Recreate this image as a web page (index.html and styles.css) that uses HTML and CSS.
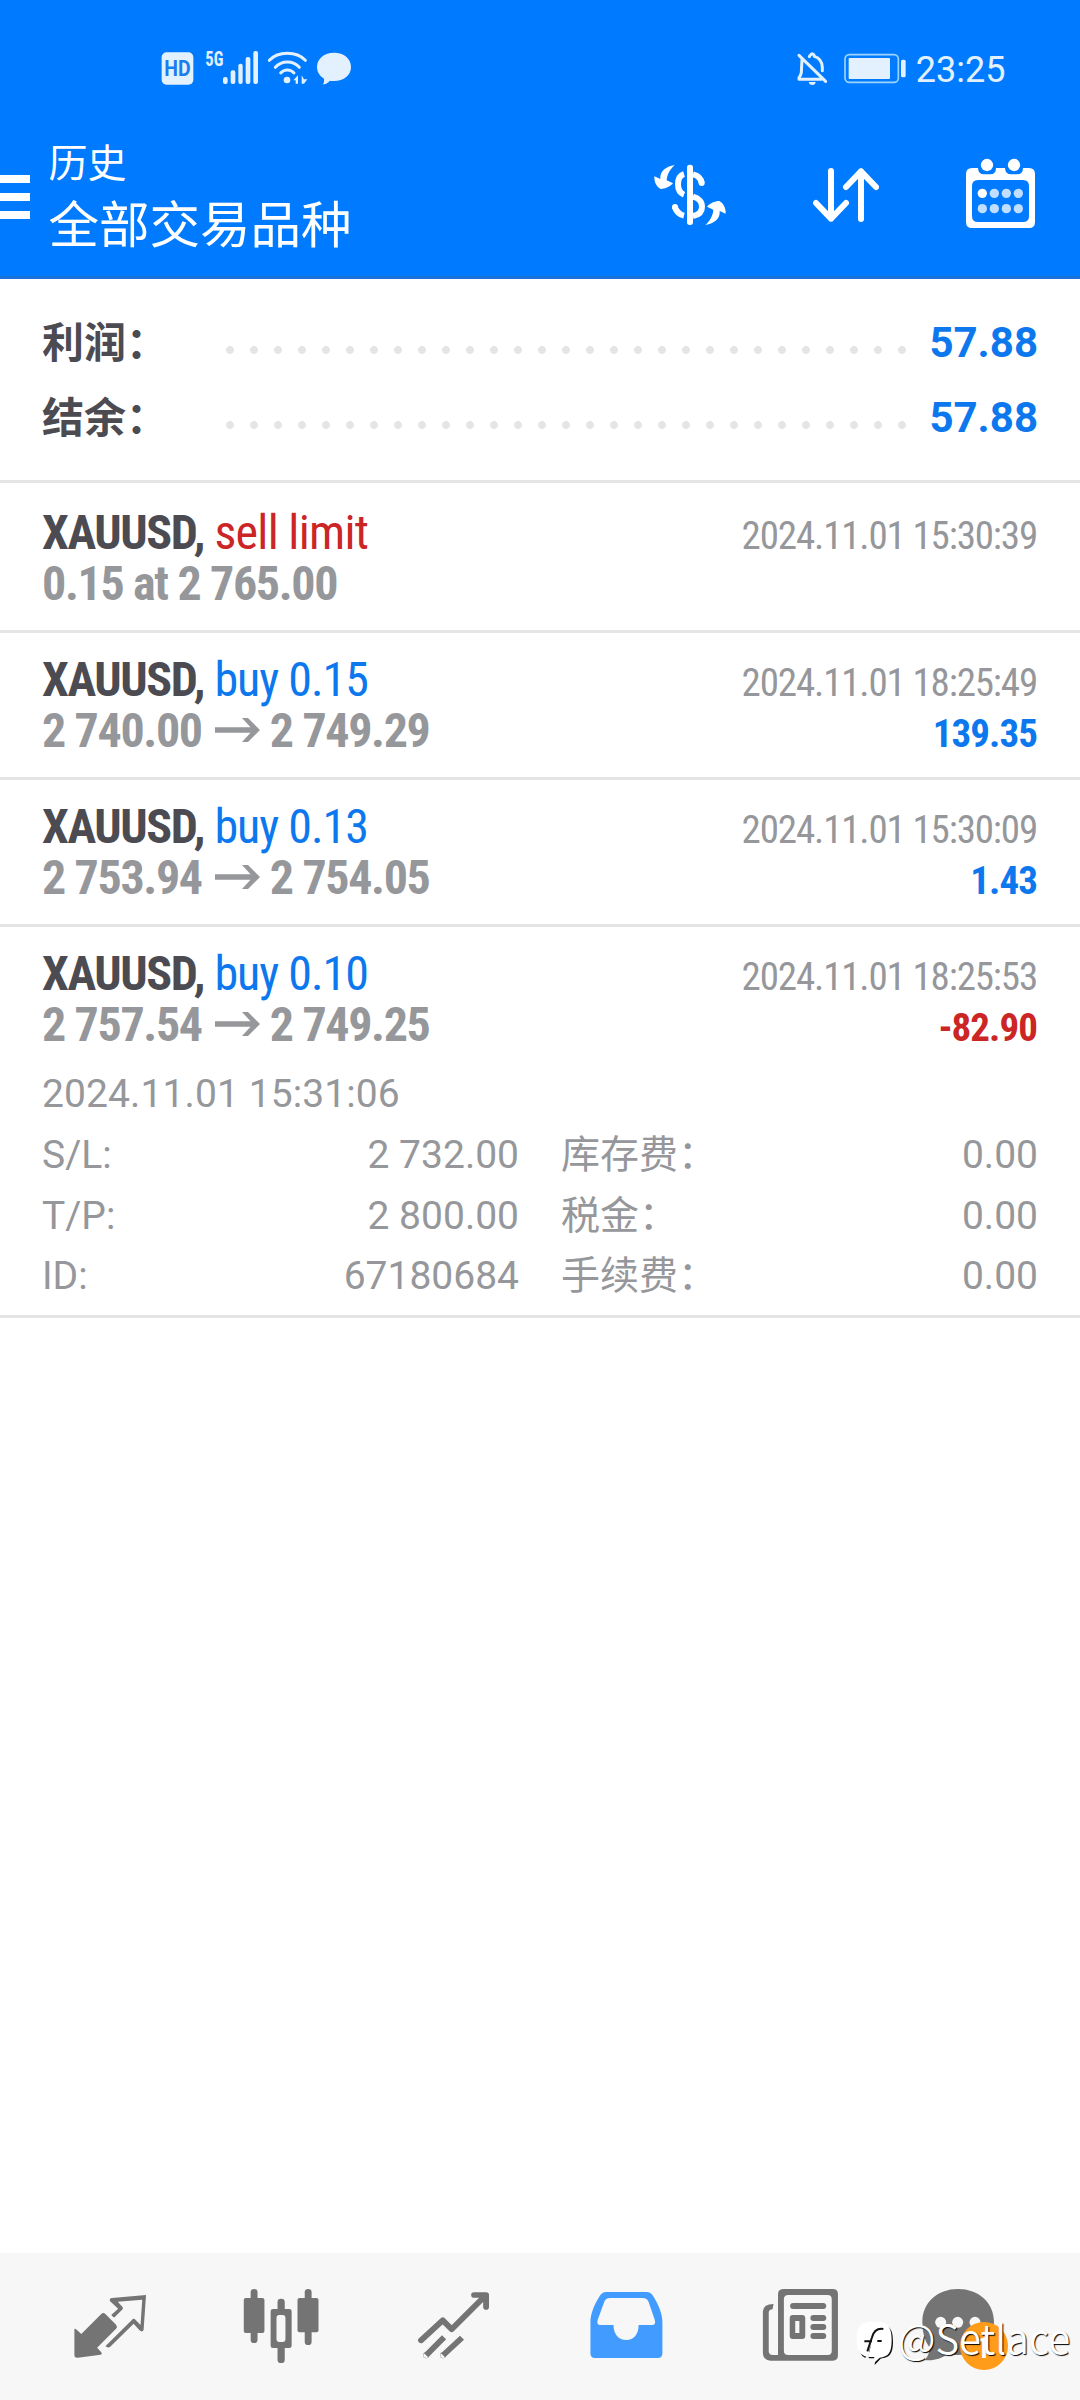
FILE: index.html
```html
<!DOCTYPE html>
<html lang="zh-CN">
<head>
<meta charset="utf-8">
<title>历史</title>
<link rel="stylesheet" href="styles.css">
</head>
<body>
<div class="app">
  <header class="header">
    <div class="status">
      <svg class="status-left" viewBox="60 60 576 105">
        <rect x="65" y="67" width="95" height="97" rx="15"/>
        <text class="hd" x="73" y="138" textLength="79" lengthAdjust="spacingAndGlyphs">HD</text>
        <text class="net" x="196" y="107" textLength="54" lengthAdjust="spacingAndGlyphs">5G</text>
        <rect x="249" y="141" width="14" height="21" rx="6"/>
        <rect x="272" y="121" width="14" height="41" rx="6"/>
        <rect x="295" y="101" width="13" height="61" rx="6"/>
        <rect x="317" y="81" width="14" height="81" rx="6"/>
        <rect x="340" y="63" width="14" height="99" rx="6"/>
        <path class="line" d="M388 91Q408 70 442 70T496 91M406 112Q420 96 442 96T478 112M422 129Q430 120 442 120T462 129"/>
        <circle cx="441" cy="150" r="10"/>
        <path d="M460 151L474 136V161H467V151ZM485 136V161H492L502 148H492Z"/>
        <path d="M582 68C612 68 633 86 633 111S612 153 582 153C578 153 573 153 570 152C564 159 556 163 549 163C552 158 553 152 552 146C539 138 531 126 531 111C531 86 553 68 582 68Z"/>
      </svg>
      <div class="status-right">
        <svg class="status-icons" viewBox="48 60 333 105">
          <path class="line" d="M66 88L64 128Q62 137 57 143V148H124M88 80Q90 75 92 75Q96 68 102 75L103 79Q126 86 127 112V122M57 76L137 154"/>
          <path d="M86 156H107Q106 165 97 165T86 156Z"/>
          <rect class="cell" x="195" y="74" width="160" height="83" rx="13"/>
          <rect x="206" y="84" width="124" height="63" rx="3"/>
          <rect x="363" y="89" width="14" height="53" rx="5"/>
        </svg>
        <span class="clock">23:25</span>
      </div>
    </div>
    <div class="toolbar">
      <svg class="menu" viewBox="0 0 30 44"><path d="M0 0H30V8H0ZM0 18H30V26H0ZM0 36H30V44H0Z"/></svg>
      <div class="titles">
        <div class="title">历史</div>
        <div class="subtitle">全部交易品种</div>
      </div>
      <div class="actions">
        <svg class="ic-currency" viewBox="69 51 222 222">
          <path d="M134 75C106 80 89 94 91 117L73 109C72 126 80 141 92 147C106 147 120 140 129 130L110 121C111 103 120 88 134 75Z"/>
          <path d="M226 255C254 250 271 236 269 213L287 221C288 204 280 189 268 183C254 183 240 190 231 200L250 209C249 227 240 242 226 255Z"/>
          <rect x="171" y="74" width="18" height="181" rx="8"/>
          <path class="s" d="M162 102C149 106 144 119 144 133C144 151 152 160 162 164M189 103C203 106 213 115 215 129M189 170C205 174 216 185 216 200C216 216 205 225 189 228M134 200C139 214 150 224 162 227"/>
          <circle cx="215" cy="129" r="9"/><circle cx="135" cy="201" r="9"/>
        </svg>
        <svg class="ic-sort" viewBox="549 51 198 222">
          <path d="M603 93V236M558 189L603 236L648 189M693 237V94M648 141L693 94L738 141"/>
        </svg>
        <svg class="ic-calendar" viewBox="1008 51 207 222">
          <path fill-rule="evenodd" d="M1026 84H1044Q1045 103 1062 103H1080Q1098 103 1098 84H1125Q1126 103 1143 103H1161Q1179 103 1179 84H1197Q1215 84 1215 102V246Q1215 264 1197 264H1026Q1008 264 1008 246V102Q1008 84 1026 84ZM1044 120Q1026 120 1026 138V228Q1026 246 1044 246H1179Q1197 246 1197 228V138Q1197 120 1179 120Z"/>
          <circle cx="1071" cy="75" r="18.500"/><circle cx="1152" cy="75" r="18.500"/>
          <circle cx="1057" cy="160" r="14"/>
          <g class="pale"><circle cx="1093" cy="160" r="14"/><circle cx="1129" cy="160" r="14"/><circle cx="1165" cy="160" r="14"/><circle cx="1057" cy="206" r="14"/><circle cx="1093" cy="206" r="14"/><circle cx="1129" cy="206" r="14"/><circle cx="1165" cy="206" r="14"/></g>
        </svg>
      </div>
    </div>
  </header>

  <section class="summary">
    <div class="sum-row"><span class="sum-label">利润：</span><span class="dots"></span><span class="sum-value">57.88</span></div>
    <div class="sum-row"><span class="sum-label">结余：</span><span class="dots"></span><span class="sum-value">57.88</span></div>
  </section>

  <main class="deals">
    <article class="deal">
      <div class="deal-line"><div class="name"><b>XAUUSD,</b> <span class="sell">sell limit</span></div><time>2024.11.01 15:30:39</time></div>
      <div class="deal-line"><div class="price">0.15 at 2 765.00</div></div>
    </article>
    <article class="deal">
      <div class="deal-line"><div class="name"><b>XAUUSD,</b> <span class="buy">buy 0.15</span></div><time>2024.11.01 18:25:49</time></div>
      <div class="deal-line"><div class="price">2 740.00<svg class="arrow" viewBox="0 0 45 24"><path d="M0 9.200H35.500L27 0H33L45 12L33 24H27L35.500 14.800H0Z"/></svg>2 749.29</div><div class="profit buy">139.35</div></div>
    </article>
    <article class="deal">
      <div class="deal-line"><div class="name"><b>XAUUSD,</b> <span class="buy">buy 0.13</span></div><time>2024.11.01 15:30:09</time></div>
      <div class="deal-line"><div class="price">2 753.94<svg class="arrow" viewBox="0 0 45 24"><path d="M0 9.200H35.500L27 0H33L45 12L33 24H27L35.500 14.800H0Z"/></svg>2 754.05</div><div class="profit buy">1.43</div></div>
    </article>
    <article class="deal open">
      <div class="deal-line"><div class="name"><b>XAUUSD,</b> <span class="buy">buy 0.10</span></div><time>2024.11.01 18:25:53</time></div>
      <div class="deal-line"><div class="price">2 757.54<svg class="arrow" viewBox="0 0 45 24"><path d="M0 9.200H35.500L27 0H33L45 12L33 24H27L35.500 14.800H0Z"/></svg>2 749.25</div><div class="profit sell">-82.90</div></div>
      <div class="details">
        <div class="opened">2024.11.01 15:31:06</div>
        <div class="cell-row"><span>S/L:</span><span>2 732.00</span></div>
        <div class="cell-row"><span>库存费：</span><span>0.00</span></div>
        <div class="cell-row"><span>T/P:</span><span>2 800.00</span></div>
        <div class="cell-row"><span>税金：</span><span>0.00</span></div>
        <div class="cell-row last"><span>ID:</span><span>67180684</span></div>
        <div class="cell-row last"><span>手续费：</span><span>0.00</span></div>
      </div>
    </article>
  </main>

  <nav class="tabs">
    <svg viewBox="159.700 90 319.400 330" preserveAspectRatio="none">
      <path d="M216 267Q218 265 221 268L236 282L294 222Q300 216 306 222L337 254Q342 260 337 266L282 323L294 337Q298 342 292 344L226 353Q216 354 216 345Z"/>
      <path d="M328 230L323 225L343 206L319 183Q317 175 325 174L424 165L417 270Q413 278 405 271L388 251L320 320Q314 325 306 319L383 240Q388 233 394 240L408 255L413 179L342 185L354 199Q360 205 354 210L334 230Q331 233 328 230Z"/>
    </svg>
    <svg viewBox="660.300 90 319.400 330" preserveAspectRatio="none">
      <rect x="729" y="147" width="20" height="162" rx="10"/><rect x="709" y="174" width="60" height="105" rx="6"/>
      <rect x="886" y="147" width="20" height="168" rx="10"/><rect x="865" y="174" width="61" height="103" rx="6"/>
      <rect x="807" y="176" width="21" height="40" rx="10"/><rect x="807" y="315" width="21" height="54" rx="10"/>
      <path fill-rule="evenodd" d="M794 207H841Q848 207 848 214V317Q848 324 841 324H794Q787 324 787 317V214Q787 207 794 207ZM812 225Q804 225 804 234V297Q804 306 812 306H822Q830 306 830 297V234Q830 225 822 225Z"/>
    </svg>
    <svg class="stroked" viewBox="1161 90 319.400 330" preserveAspectRatio="none">
      <path d="M1222 301L1285 241L1311 268L1407 169M1376 165H1411V201"/>
      <path class="butt" d="M1237 346L1289 292M1286 346L1341 293"/><circle cx="1237" cy="346" r="0.500"/><circle cx="1286" cy="346" r="0.500"/>
    </svg>
    <svg class="active" viewBox="93.500 90 319.400 330" preserveAspectRatio="none">
      <path fill-rule="evenodd" d="M193 156H310Q322 156 329 168C343 191 356 220 356 246V340Q356 354 343 354H160Q147 354 147 340V246C147 220 160 191 174 168Q181 156 193 156ZM204 174Q191 174 187 186L168 240Q164 255 176 255H214C214 283 229 300 251 300S287 283 287 255H326Q338 255 334 240L316 186Q312 174 298 174Z"/>
    </svg>
    <svg viewBox="594.100 90 319.400 330" preserveAspectRatio="none">
      <path fill-rule="evenodd" d="M707 147H849Q864 147 864 162V346Q864 362 849 362H668Q646 360 646 338V214Q648 192 677 192L674 208Q663 208 663 219V334Q663 345 675 345H690V162Q690 147 707 147ZM720 165Q707 165 707 178V332Q707 345 720 345H834Q846 345 846 332V178Q846 165 834 165Z"/>
      <rect x="725" y="189" width="105" height="18" rx="9"/><rect x="784" y="225" width="46" height="18" rx="9"/><rect x="784" y="252" width="46" height="18" rx="9"/><rect x="784" y="279" width="46" height="18" rx="9"/>
      <path fill-rule="evenodd" d="M733 225H760Q769 225 769 234V288Q769 297 760 297H733Q724 297 724 288V234Q724 225 733 225ZM740 243V279H752V243Z"/>
    </svg>
    <svg viewBox="201 -30 330 330">
      <path d="M324 27C386 27 432 68 432 126S386 225 324 225Q306 225 292 222C274 237 249 243 224 240Q240 224 238 202Q217 174 217 126C217 68 262 27 324 27Z"/>
      <g class="holes"><circle cx="272" cy="127" r="16.500"/><circle cx="323" cy="127" r="16.500"/><circle cx="375" cy="127" r="16.500"/></g>
      <circle class="badge" cx="402" cy="198" r="72"/>
      <text class="badge-text" x="399" y="233" text-anchor="middle">1</text>
    </svg>
  </nav>

  <div class="watermark">
    <svg viewBox="20 120 114 138">
      <path class="mark-shadow" d="M76 131C117 131 131 142 131 184C131 224 120 233 94 236L76 255L78 235C70 235 62 235 58 234L60 206L48 234Q27 226 26 184C26 144 38 131 76 131Z"/>
      <path class="mark" d="M74 125C114 125 127 138 127 180C127 220 116 230 91 233L73 250L75 231Q64 232 56 230L66 192L52 230Q22 224 22 180C22 138 34 125 74 125Z"/>
      <path class="mark-f" d="M102 147Q76 143 68 172L54 214M45 184H68M84 183H97"/>
    </svg>
    <span>@Setlace</span>
  </div>
</div>
</body>
</html>
```
FILE: styles.css
```css
* { box-sizing: border-box; }

body {
  margin: 0;
  background: #fff;
  font-family: Roboto, "Noto Sans CJK SC", sans-serif;
}

svg { display: block; flex: none; }

.app {
  position: relative;
  display: flex;
  flex-direction: column;
  width: 1080px;
  height: 2400px;
  overflow: hidden;
}

/* Header */
.header {
  height: 279px;
  background: #007bff;
  border-bottom: 3px solid #1a71d6;
  color: #fff;
}

.status {
  display: flex;
  justify-content: space-between;
  height: 136px;
  padding: 50px 74.500px 0 160px;
  color: #e3f1ff;
  fill: #e3f1ff;
}

.status-left { width: 192px; height: 35px; overflow: visible; }
.status-right { display: flex; gap: 9px; }
.status-icons { width: 111px; height: 35px; }
.status .line { fill: none; stroke: #e3f1ff; stroke-width: 9; stroke-linecap: round; stroke-linejoin: round; }
.status .cell { fill: none; stroke: #9dd4ff; stroke-width: 5; }
.hd { font: 700 64px Roboto, sans-serif; fill: #1a7df0; }
.net { font: 700 62px Roboto, sans-serif; font-stretch: 75%; }
.clock { font-size: 36px; line-height: 40px; }

.toolbar { display: flex; fill: #fff; }
.menu { width: 30px; height: 44px; margin-top: 39px; }
.titles { flex: 1; margin-left: 18.500px; }
.title { font-size: 39px; line-height: 57px; height: 55px; }
.subtitle { font-size: 50.500px; line-height: 70px; }

.actions { display: flex; padding: 21px 45px 0 0; }
.actions svg { height: 74px; }
.ic-currency { width: 74px; }
.ic-sort { width: 66px; margin-left: 86px; }
.ic-calendar { width: 69px; margin-left: 87px; }
.ic-currency .s { fill: none; stroke: #fff; stroke-width: 18; }
.ic-sort { fill: none; stroke: #fff; stroke-width: 18; stroke-linecap: round; stroke-linejoin: round; }
.pale { fill: #c0deff; }

/* Totals */
.summary {
  padding: 26px 42px 25px;
  border-bottom: 3px solid #e5e5e5;
  margin-bottom: 3px;
}

.sum-row {
  display: flex;
  height: 75px;
  line-height: 75px;
  font-size: 42px;
  font-weight: 700;
  color: #4c4b52;
}

.sum-label { width: 176px; line-height: 77px; white-space: nowrap; }
.dots {
  width: 696px;
  height: 24px;
  margin-top: 33px;
  background: radial-gradient(circle, #e5e5e5 3.600px, transparent 4.300px) 0 0 / 24px 24px;
}
.sum-value { flex: 1; text-align: right; color: #0d78ee; }

/* Deals */
.deal { padding: 21px 42px; border-bottom: 3px solid #e5e5e5; }
.deal-line {
  display: flex;
  justify-content: space-between;
  align-items: baseline;
  height: 51px;
  font-stretch: 75%;
  white-space: nowrap;
}

.name, .price { font-size: 48px; line-height: 51px; }
.name { color: #4c4b52; letter-spacing: -0.700px; }
.name .buy { letter-spacing: -1px; }
.name b { letter-spacing: -1.400px; }
.price { font-weight: 700; letter-spacing: -1.350px; color: #96979b; }
.arrow {
  display: inline-block;
  width: 45px;
  height: 24px;
  margin: 0 10px 0 13px;
  vertical-align: 5px;
  fill: #96979b;
}

.deal-line time, .profit { font-size: 39px; line-height: 44px; margin-right: 1px; }
.deal-line time { letter-spacing: -1.150px; color: #96979b; }
.profit { font-weight: 700; letter-spacing: -0.950px; }
.buy { color: #0d78ee; }
.sell { color: #cc2526; }

.open { padding-bottom: 9px; }
.details {
  display: grid;
  grid-template-columns: 477px 477px;
  column-gap: 42px;
  margin-top: 14px;
  font-size: 39px;
  line-height: 61px;
  color: #96979b;
}
.opened { grid-column: 1 / -1; letter-spacing: 0.100px; }
.cell-row { display: flex; justify-content: space-between; }
.cell-row.last { line-height: 59px; }

/* Bottom tabs */
.tabs {
  display: grid;
  grid-template-columns: repeat(6, 172.400px);
  justify-items: center;
  align-items: start;
  height: 147px;
  margin-top: auto;
  padding: 17px 0 0 23.800px;
  background: #f7f7f7;
}
.tabs svg { width: 110px; height: 110px; fill: #747474; }
.tabs .active { fill: #429cff; }
.tabs .stroked { fill: none; stroke: #747474; stroke-width: 17; stroke-linecap: round; stroke-linejoin: round; }
.tabs .butt { stroke-linecap: butt; }
.tabs .holes { fill: #f7f7f7; }
.tabs .badge { fill: #ff9c1a; }
.badge-text { font: 500 90px Roboto, sans-serif; fill: #fff; }

.watermark {
  position: absolute;
  left: 856px;
  top: 2320px;
  display: flex;
  gap: 4px;
  color: #fff;
  font: 350 40px/34px "Noto Sans CJK SC", sans-serif;
  text-shadow: 1px 1px 1px #000;
}
.watermark svg { width: 38px; height: 46px; }
.mark { fill: #fff; }
.mark-shadow { fill: #111; }
.mark-f { fill: none; stroke: #111; stroke-width: 6; }
```
